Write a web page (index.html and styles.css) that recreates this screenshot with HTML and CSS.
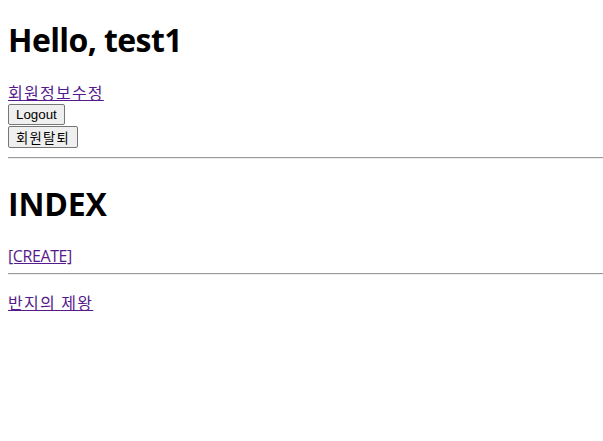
FILE: index.html
```html
<!DOCTYPE html>
<html lang="ko">
<head>
<meta charset="utf-8">
<title>INDEX</title>
<link rel="stylesheet" href="styles.css">
</head>
<body>
<h1 class="hello">Hello, test1</h1>
<div class="row"><a class="link ko" href="#">회원정보수정</a></div>
<div class="buttons">
  <button class="btn btn-logout" type="button">Logout</button>
  <button class="btn btn-leave" type="button">회원탈퇴</button>
</div>
<hr class="rule rule-top">
<h1 class="index">INDEX</h1>
<div class="row row-create"><a class="link latin" href="#">[CREATE]</a></div>
<hr class="rule rule-bottom">
<div class="row row-item"><a class="link ko" href="#">반지의 제왕</a></div>
</body>
</html>
```
FILE: styles.css
```css
html, body {
  background: #ffffff;
}
body {
  margin: 0;
  padding: 0 0 0 8px;
  font-family: "Open Sans", "Noto Sans CJK KR", sans-serif;
  font-size: 16px;
  color: #000;
}
.hello, .index {
  font-size: 32px;
  font-weight: 700;
  line-height: 43px;
  margin: 0;
}
.hello {
  padding-top: 18px;
  letter-spacing: -0.6px;
}
.index {
  letter-spacing: -0.2px;
}
.row {
  line-height: 21px;
  height: 21px;
}
.hello + .row {
  margin-top: 22px;
}
.link {
  color: #551a8b;
  text-decoration: underline;
}
.ko {
  letter-spacing: 1.25px;
}
.latin {
  letter-spacing: -0.4px;
}
.buttons {
  display: flex;
  flex-direction: column;
  align-items: flex-start;
  gap: 1px;
}
.btn {
  font-family: "Liberation Sans", "Noto Sans CJK KR", sans-serif;
  font-size: 13.333px;
  background: #efefef;
  border: 1px solid #767676;
  border-radius: 2px;
  padding: 0 7px;
  color: #000;
  margin: 0;
}
.btn-logout {
  height: 21px;
}
.btn-leave {
  height: 22px;
  letter-spacing: 1.25px;
}
.rule {
  border: 0;
  border-top: 1px solid #9a9a9a;
  border-bottom: 1px solid #eeeeee;
  height: 0;
  margin: 0;
}
.rule-top {
  margin-top: 9px;
}
.index {
  margin-top: 23px;
}
.row-create {
  margin-top: 21px;
}
.rule-bottom {
  margin-top: 6px;
}
.row-item {
  margin-top: 18px;
}
```
